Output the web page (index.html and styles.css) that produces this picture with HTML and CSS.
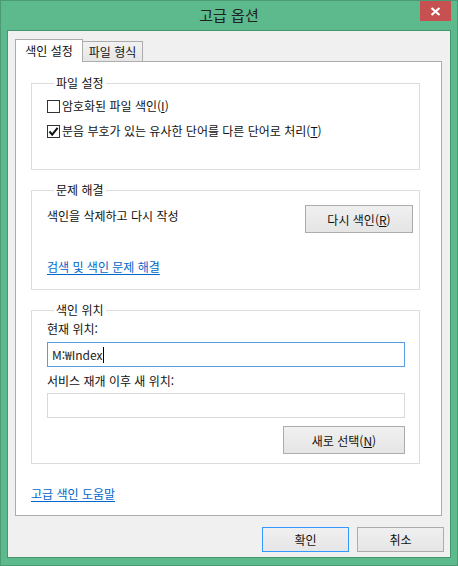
FILE: index.html
```html
<!DOCTYPE html>
<html lang="ko">
<head>
    <meta charset="UTF-8">
    <meta name="viewport" content="width=device-width, initial-scale=1.0">
    <title>고급 옵션</title>
    <link rel="stylesheet" href="styles.css">
</head>
<body>
    <div class="window">
        <div class="titlebar">고급 옵션</div>
        <a class="btn-close" title="닫기">
            <svg width="11" height="9" viewBox="0 0 11 9">
                <path d="M1.5 1 L9.5 8 M9.5 1 L1.5 8" stroke="#fff" stroke-width="2.2" fill="none"/>
            </svg>
        </a>

        <div class="client">
            <div class="tabs">
                <div class="tab active">색인 설정</div>
                <div class="tab">파일 형식</div>
            </div>

            <div class="panel">
                <fieldset class="group group-files">
                    <legend>파일 설정</legend>
                    <label class="check-row">
                        <span class="check"></span>
                        <span>암호화된 파일 색인(<u>I</u>)</span>
                    </label>
                    <label class="check-row">
                        <span class="check checked">
                            <svg width="11" height="11" viewBox="0 0 11 11">
                                <path d="M1.5 5.5 L4.2 8.6 L9.6 1.8" stroke="#111" stroke-width="2" fill="none"/>
                            </svg>
                        </span>
                        <span>분음 부호가 있는 유사한 단어를 다른 단어로 처리(<u>T</u>)</span>
                    </label>
                </fieldset>

                <fieldset class="group group-trouble">
                    <legend>문제 해결</legend>
                    <div class="rebuild-row">
                        <span class="rebuild-text">색인을 삭제하고 다시 작성</span>
                        <button class="btn btn-rebuild">다시 색인(<u>R</u>)</button>
                    </div>
                    <a class="link link-trouble">검색 및 색인 문제 해결</a>
                </fieldset>

                <fieldset class="group group-location">
                    <legend>색인 위치</legend>
                    <div class="field-label label-current">현재 위치:</div>
                    <div class="textbox focused">M:₩Index<span class="caret"></span></div>
                    <div class="field-label label-new">서비스 재개 이후 새 위치:</div>
                    <div class="textbox"></div>
                    <div class="select-row">
                        <button class="btn btn-select">새로 선택(<u>N</u>)</button>
                    </div>
                </fieldset>

                <a class="link link-help">고급 색인 도움말</a>
            </div>

            <div class="dialog-buttons">
                <button class="btn btn-default">확인</button>
                <button class="btn">취소</button>
            </div>
        </div>
    </div>
</body>
</html>
```

FILE: styles.css
```css
body, html {
    margin: 0;
    padding: 0;
}

body {
    font-family: "Noto Sans CJK KR", "Noto Sans", sans-serif;
    font-size: 12px;
    line-height: 16px;
    color: #111;
}

u {
    text-decoration: underline;
    text-underline-offset: 1px;
}

.window {
    position: relative;
    box-sizing: border-box;
    width: 458px;
    height: 566px;
    padding: 0 6px 7px;
    border: 1px solid #4a9b74;
    background-color: #5cba8c;
    display: flex;
    flex-direction: column;
}

.titlebar {
    height: 29px;
    display: flex;
    align-items: center;
    justify-content: center;
    font-size: 15px;
    color: #222;
    padding-bottom: 1px;
    box-sizing: border-box;
}

.btn-close {
    position: absolute;
    top: 0;
    right: 6px;
    width: 31px;
    height: 20px;
    background-color: #c75050;
    display: flex;
    align-items: center;
    justify-content: center;
}

.client {
    flex: 1;
    border: 1px solid #47956f;
    background-color: #f0f0f0;
    padding: 8px 8px 0 7px;
}

/* tabs */

.tabs {
    display: flex;
    align-items: flex-end;
    height: 22px;
}

.tab {
    box-sizing: border-box;
    height: 20px;
    width: 61px;
    margin-left: -1px;
    border: 1px solid #acacac;
    border-bottom: none;
    background: linear-gradient(#f2f2f2, #e6e6e6);
    text-align: center;
    line-height: 20px;
}

.tab.active {
    position: relative;
    z-index: 1;
    width: 68px;
    height: 23px;
    margin-left: 0;
    margin-bottom: -1px;
    background: #fff;
    line-height: 21px;
}

.panel {
    box-sizing: border-box;
    height: 455px;
    border: 1px solid #acacac;
    background-color: #fff;
    padding: 0 21px 0 15px;
}

/* group boxes */

.group {
    box-sizing: border-box;
    width: 389px;
    margin: 12px 0 0;
    border: 1px solid #dcdcdc;
    padding: 0 14px 0 15px;
    min-width: 0;
}

.group legend {
    margin-left: 7px;
    padding: 0 2px;
    line-height: 16px;
}

.group-files {
    margin-top: 13px;
    padding-top: 7px;
    padding-bottom: 30px;
}

.check-row {
    display: flex;
    align-items: center;
    height: 16px;
}

.check-row + .check-row {
    margin-top: 9px;
}

.check {
    box-sizing: border-box;
    width: 13px;
    height: 13px;
    border: 1px solid #333;
    background-color: #fff;
    margin-right: 2px;
    display: flex;
    align-items: center;
    justify-content: center;
}

.group-trouble {
    padding-bottom: 14px;
}

.rebuild-row {
    display: flex;
    justify-content: space-between;
    align-items: flex-start;
    margin-right: -8px;
}

.rebuild-text {
    margin-top: 10px;
}

.btn {
    box-sizing: border-box;
    height: 25px;
    width: 87px;
    padding: 0;
    border: 1px solid #acacac;
    background: linear-gradient(#f0f0f0, #e5e5e5);
    font-family: inherit;
    font-size: 12px;
    color: #111;
}

.btn-rebuild {
    margin-top: 7px;
    width: 108px;
    height: 28px;
}

.btn-default {
    border-color: #3399ff;
}

.link {
    display: block;
    color: #0066cc;
    text-decoration: underline;
    text-underline-offset: 2px;
    cursor: pointer;
}

.link-trouble {
    margin-top: 26px;
    width: max-content;
}

.group-location {
    padding-bottom: 9px;
}

.field-label {
    margin-top: 3px;
}

.label-new {
    margin-top: 6px;
}

.textbox {
    box-sizing: border-box;
    height: 25px;
    margin-top: 5px;
    border: 1px solid #d9d9d9;
    padding: 0 4px;
    line-height: 23px;
    color: #222;
    display: flex;
    align-items: center;
}

.label-new + .textbox {
    margin-top: 4px;
}

.textbox.focused {
    border-color: #569de5;
}

.caret {
    width: 1px;
    height: 16px;
    background-color: #000;
}

.select-row {
    display: flex;
    justify-content: flex-end;
    margin-top: 8px;
}

.btn-select {
    width: 122px;
    height: 28px;
}

.link-help {
    margin-top: 22px;
    width: max-content;
}

.dialog-buttons {
    display: flex;
    justify-content: flex-end;
    gap: 8px;
    margin: 11px -2px 0 0;
}
```
